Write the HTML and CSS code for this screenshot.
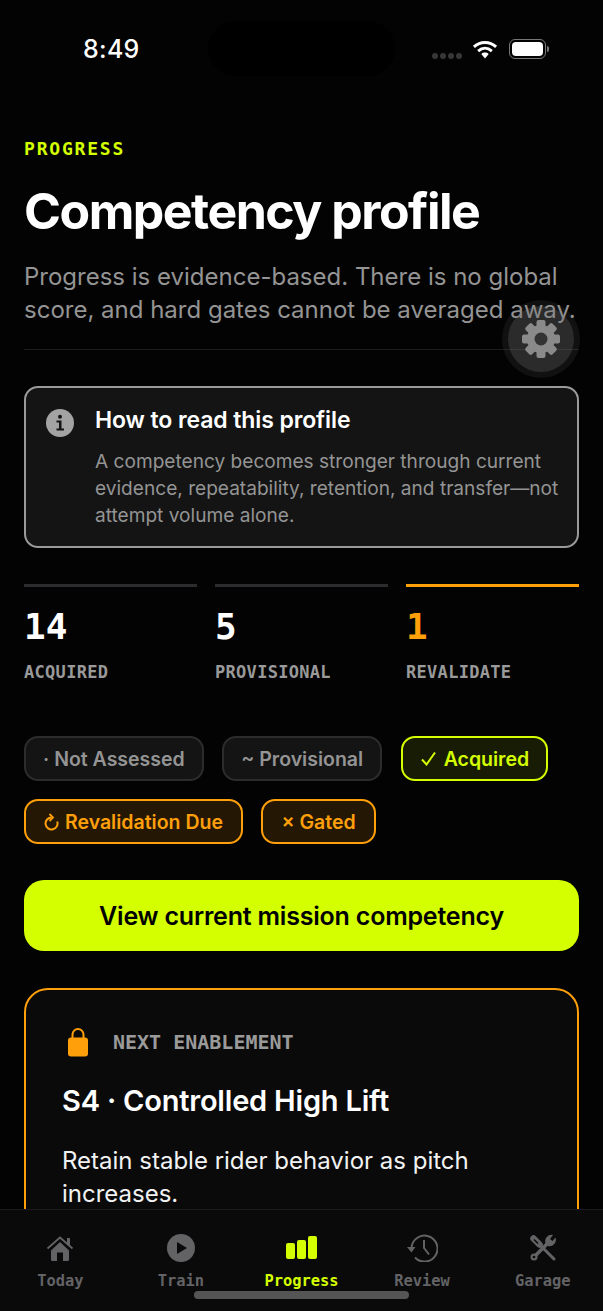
FILE: index.html
```html
<!DOCTYPE html>
<html lang="en">
<head>
    <meta charset="UTF-8">
    <meta name="viewport" content="width=device-width, initial-scale=1.0">
    <title>Competency profile</title>
    <link rel="stylesheet" href="styles.css">
</head>
<body>

    <div class="screen">
        <!-- Status bar -->
        <div class="status-bar">
            <span class="time">8:49</span>
            <div class="island"></div>
            <div class="status-icons">
                <div class="signal"><i></i><i></i><i></i><i></i></div>
                <svg class="wifi" width="26" height="19" viewBox="0 0 24 18">
                    <path d="M1.500 6.500C7.500 1 16.500 1 22.500 6.500" fill="none" stroke="#fff" stroke-width="2.800"/>
                    <path d="M5.500 10.500C9.500 7 14.500 7 18.500 10.500" fill="none" stroke="#fff" stroke-width="2.800"/>
                    <path d="M8.500 13.200C10.500 11.500 13.500 11.500 15.500 13.200L12 17.500Z" fill="#fff"/>
                </svg>
                <div class="battery"><div class="battery-fill"></div></div>
                <div class="battery-cap"></div>
            </div>
        </div>

        <div class="content">
            <div class="eyebrow">PROGRESS</div>
            <h1>Competency profile</h1>
            <p class="intro">Progress is evidence-based. There is no global score, and hard gates cannot be averaged away.</p>
            <div class="rule"></div>

            <!-- Info card -->
            <div class="info-card">
                <svg class="info-icon" width="28" height="28" viewBox="0 0 28 28">
                    <circle cx="14" cy="14" r="14" fill="#a3a3a3"/>
                    <circle cx="14" cy="7.800" r="2" fill="#141414"/>
                    <path d="M10.500 11.500H15.500V19.500H18V21.500H10.500V19.500H13V13.500H10.500Z" fill="#141414"/>
                </svg>
                <div class="info-body">
                    <h2>How to read this profile</h2>
                    <p>A competency becomes stronger through current evidence, repeatability, retention, and transfer—not attempt volume alone.</p>
                </div>
            </div>

            <!-- Counts -->
            <div class="stats">
                <div class="stat">
                    <div class="stat-num">14</div>
                    <div class="stat-label">ACQUIRED</div>
                </div>
                <div class="stat">
                    <div class="stat-num">5</div>
                    <div class="stat-label">PROVISIONAL</div>
                </div>
                <div class="stat stat-warn">
                    <div class="stat-num">1</div>
                    <div class="stat-label">REVALIDATE</div>
                </div>
            </div>

            <!-- Legend -->
            <div class="chips">
                <span class="chip">· Not Assessed</span>
                <span class="chip">~ Provisional</span>
                <span class="chip chip-lime">
                    <svg width="15" height="15" viewBox="0 0 15 15">
                        <path d="M1 8.500L5.500 13.500L14 1.500" fill="none" stroke="#d4ff00" stroke-width="2"/>
                    </svg>
                    Acquired
                </span>
                <span class="chip chip-orange">
                    <svg width="15" height="18" viewBox="0 0 15 18">
                        <path d="M7.500 4.500A6 6 0 1 0 13.200 8.500" fill="none" stroke="#ff9f0a" stroke-width="2"/>
                        <path d="M5.500 1L9 4.500L5.500 8" fill="none" stroke="#ff9f0a" stroke-width="1.800"/>
                    </svg>
                    Revalidation Due
                </span>
                <span class="chip chip-orange">× Gated</span>
            </div>

            <button class="cta">View current mission competency</button>

            <!-- Next enablement -->
            <div class="next-card">
                <div class="next-head">
                    <svg width="20" height="30" viewBox="0 0 20 30">
                        <path d="M4.500 12V7.500a5.500 5.500 0 0 1 11 0V12" fill="none" stroke="#ff9f0a" stroke-width="2"/>
                        <rect x="0" y="10.500" width="20" height="19" rx="3" fill="#ff9f0a"/>
                    </svg>
                    <span>NEXT ENABLEMENT</span>
                </div>
                <h3>S4 · Controlled High Lift</h3>
                <p>Retain stable rider behavior as pitch increases.</p>
            </div>
        </div>

        <!-- Floating settings button -->
        <div class="fab">
            <div class="fab-inner">
                <svg width="40" height="40" viewBox="0 0 40 40">
                    <g fill="#8a8a8a">
                        <rect x="15.500" y="1" width="9" height="38" rx="2"/>
                        <rect x="15.500" y="1" width="9" height="38" rx="2" transform="rotate(45 20 20)"/>
                        <rect x="15.500" y="1" width="9" height="38" rx="2" transform="rotate(90 20 20)"/>
                        <rect x="15.500" y="1" width="9" height="38" rx="2" transform="rotate(135 20 20)"/>
                        <circle cx="20" cy="20" r="14"/>
                    </g>
                    <circle cx="20" cy="20" r="6.500" fill="#333"/>
                </svg>
            </div>
        </div>

        <!-- Tab bar -->
        <nav class="tabs">
            <div class="tab">
                <svg width="28" height="28" viewBox="0 0 28 28" fill="#636366">
                    <path d="M1.500 14.500L14 3.500L26.500 14.500" fill="none" stroke="#636366" stroke-width="1.800"/>
                    <rect x="21" y="4" width="3" height="7"/>
                    <path d="M5 16.500L14 8L23 16.500V25.500A1.500 1.500 0 0 1 21.500 27H6.500A1.500 1.500 0 0 1 5 25.500ZM11 18.500V27H17V18.500Z" fill-rule="evenodd"/>
                </svg>
                <span>Today</span>
            </div>
            <div class="tab">
                <svg width="28" height="28" viewBox="0 0 28 28">
                    <circle cx="14" cy="14" r="14" fill="#636366"/>
                    <path d="M10 8L20 14L10 20Z" fill="#0a0a0a"/>
                </svg>
                <span>Train</span>
            </div>
            <div class="tab tab-active">
                <svg width="32" height="28" viewBox="0 0 32 28" fill="#d4ff00">
                    <rect x="1" y="9" width="9" height="16" rx="2"/>
                    <rect x="12" y="6" width="9" height="19" rx="2"/>
                    <rect x="23" y="2" width="9" height="23" rx="2"/>
                </svg>
                <span>Progress</span>
            </div>
            <div class="tab">
                <svg width="32" height="28" viewBox="0 0 32 28" fill="none" stroke="#636366">
                    <path d="M5.500 14A13 13 0 1 1 9 23.500" stroke-width="2"/>
                    <path d="M1 13H9.500L5.500 18.500Z" fill="#636366" stroke="none"/>
                    <path d="M18 6V14L23 20.500" stroke-width="2"/>
                </svg>
                <span>Review</span>
            </div>
            <div class="tab">
                <svg width="28" height="28" viewBox="0 0 28 28" fill="none" stroke="#636366">
                    <path d="M4.500 4.500L10.500 10.500" stroke-width="6.500" stroke-linecap="round"/>
                    <path d="M5 5.500L9 9.500" stroke="#0a0a0a" stroke-width="1.400"/>
                    <path d="M11 11L25 25" stroke-width="3" stroke-linecap="round"/>
                    <path d="M19 9L5 23" stroke-width="3.500"/>
                    <circle cx="5" cy="23" r="3.500" fill="#636366" stroke="none"/>
                    <circle cx="5" cy="23" r="1.300" fill="#0a0a0a" stroke="none"/>
                    <path d="M26.500 3.500L23.500 7L21 5L24 1A6.500 6.500 0 0 0 16.500 9.500L19 12A6.500 6.500 0 0 0 26.500 3.500Z" fill="#636366" stroke="none"/>
                </svg>
                <span>Garage</span>
            </div>
        </nav>
        <div class="home-indicator"></div>
    </div>

</body>
</html>
```

FILE: styles.css
```css
* {
    box-sizing: border-box;
}
html, body {
    margin: 0;
    padding: 0;
    background-color: #030303;
}
body {
    font-family: Inter, "Liberation Sans", sans-serif;
    color: #fff;
}
.screen {
    position: relative;
    width: 603px;
    height: 1311px;
    overflow: hidden;
    background-color: #030303;
}

/* status bar */
.status-bar {
    display: flex;
    justify-content: space-between;
    align-items: center;
    height: 98px;
    padding: 0 54px 0 83px;
}
.time {
    font-size: 25px;
    font-weight: 500;
    letter-spacing: 0.300px;
}
.island {
    position: absolute;
    left: 208px;
    top: 21px;
    width: 187px;
    height: 55px;
    border-radius: 28px;
    background-color: #000;
}
.status-icons {
    display: flex;
    align-items: center;
}
.signal {
    display: flex;
    gap: 2px;
    margin: 14px 10px 0 0;
}
.signal i {
    width: 6px;
    height: 6px;
    border-radius: 50%;
    background-color: #363636;
}
.battery {
    width: 37px;
    height: 20px;
    margin-left: 11px;
    padding: 2px;
    border: 1px solid #777;
    border-radius: 6px;
}
.battery-fill {
    height: 100%;
    border-radius: 4px;
    background-color: #fff;
}
.battery-cap {
    width: 2px;
    height: 6px;
    margin-left: 1px;
    border-radius: 0 2px 2px 0;
    background-color: #777;
}

.content {
    padding: 0 24px;
}
.eyebrow {
    margin-top: 41px;
    font-family: "DejaVu Sans Mono", monospace;
    font-size: 18px;
    font-weight: 700;
    line-height: 20px;
    letter-spacing: 1.800px;
    color: #d4ff00;
}
h1 {
    margin: 22px 0 0;
    font-size: 50px;
    font-weight: 700;
    line-height: 60px;
    letter-spacing: -1.500px;
}
.intro {
    margin: 19px 0 0;
    font-size: 24px;
    line-height: 33px;
    color: #949494;
}
.rule {
    height: 1px;
    margin-top: 23px;
    background-color: #1c1c1e;
}

/* info card */
.info-card {
    display: flex;
    gap: 21px;
    height: 162px;
    margin-top: 36px;
    padding: 17px 16px 17px 20px;
    border: 2px solid #9a9a9a;
    border-radius: 14px;
    background-color: #141414;
}
.info-icon {
    flex: none;
    margin-top: 4px;
}
.info-body h2 {
    margin: 0;
    font-size: 23px;
    font-weight: 600;
    line-height: 30px;
    letter-spacing: -0.100px;
}
.info-body p {
    margin: 13px 0 0;
    font-size: 19.100px;
    line-height: 27px;
    color: #949494;
}

/* counts */
.stats {
    display: grid;
    grid-template-columns: repeat(3, 1fr);
    gap: 18px;
    margin-top: 36px;
}
.stat {
    border-top: 3px solid #2c2c2e;
}
.stat-num {
    margin-top: 18px;
    font-family: "DejaVu Sans Mono", monospace;
    font-size: 36px;
    font-weight: 700;
    line-height: 44px;
}
.stat-label {
    margin-top: 13px;
    font-family: "DejaVu Sans Mono", monospace;
    font-size: 17px;
    font-weight: 700;
    line-height: 20px;
    letter-spacing: 0.300px;
    color: #9a9a9a;
}
.stat-warn {
    border-top-color: #ff9f0a;
}
.stat-warn .stat-num {
    color: #ff9f0a;
}

/* legend */
.chips {
    display: flex;
    flex-wrap: wrap;
    gap: 18px 18.500px;
    margin-top: 54px;
}
.chip {
    display: flex;
    align-items: center;
    gap: 6px;
    height: 45px;
    padding: 0 17px;
    border: 2px solid #2c2c2e;
    border-radius: 14px;
    background-color: #141414;
    font-size: 19.500px;
    font-weight: 600;
    color: #949494;
}
.chip-lime {
    gap: 8px;
    padding: 0 17px 0 18px;
    border-color: #d4ff00;
    background-color: #191c05;
    color: #d4ff00;
}
.chip-orange {
    padding: 0 18px;
    border-color: #ff9f0a;
    background-color: #241804;
    color: #ff9f0a;
}

.cta {
    display: block;
    width: 100%;
    height: 71px;
    margin-top: 36px;
    border: none;
    border-radius: 20px;
    background-color: #d4ff00;
    font-family: inherit;
    font-size: 25px;
    font-weight: 600;
    letter-spacing: -0.200px;
    color: #000;
}

/* next card */
.next-card {
    height: 300px;
    margin-top: 37px;
    padding: 37px 36px;
    border: 2px solid #ff9f0a;
    border-radius: 24px;
    background-color: #0a0a0a;
}
.next-head {
    display: flex;
    align-items: center;
    gap: 25px;
    padding-left: 6px;
    font-family: "DejaVu Sans Mono", monospace;
    font-size: 20px;
    font-weight: 700;
    color: #9a9a9a;
}
.next-card h3 {
    margin: 26px 0 0;
    font-size: 29px;
    font-weight: 600;
    line-height: 36px;
    letter-spacing: -0.200px;
}
.next-card p {
    margin: 25px 0 0;
    font-size: 24px;
    line-height: 33px;
    color: #f2f2f2;
}

/* floating settings, text shows through it */
.fab {
    position: absolute;
    left: 502px;
    top: 300px;
    display: flex;
    align-items: center;
    justify-content: center;
    width: 78px;
    height: 78px;
    border-radius: 50%;
    background-color: rgba(120, 120, 120, 0.12);
}
.fab-inner {
    display: flex;
    align-items: center;
    justify-content: center;
    width: 66px;
    height: 66px;
    border-radius: 50%;
    background-color: rgba(120, 120, 120, 0.26);
}

/* tab bar */
.tabs {
    position: absolute;
    left: 0;
    right: 0;
    bottom: 0;
    display: grid;
    grid-template-columns: repeat(5, 1fr);
    height: 102px;
    padding-top: 24px;
    border-top: 1px solid #1c1c1e;
    background-color: #0a0a0a;
}
.tab {
    display: flex;
    flex-direction: column;
    align-items: center;
    gap: 9px;
    font-family: "DejaVu Sans Mono", monospace;
    font-size: 15.400px;
    font-weight: 700;
    line-height: 20px;
    color: #636366;
}
.tab-active {
    color: #d4ff00;
}
.home-indicator {
    position: absolute;
    left: 194px;
    bottom: 12px;
    width: 215px;
    height: 8px;
    border-radius: 4px;
    background-color: #555;
}
```
